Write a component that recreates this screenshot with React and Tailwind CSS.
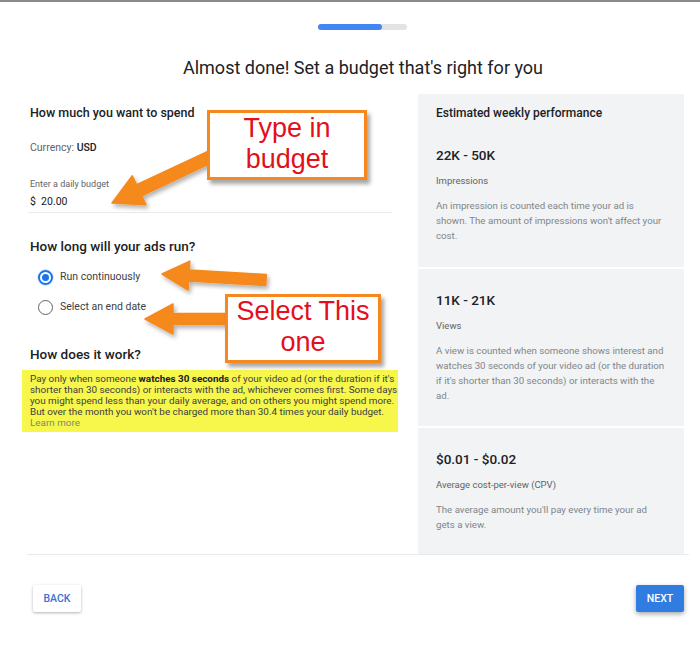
import React from "react";

const font = "font-['Roboto','Liberation_Sans',sans-serif]";

// polygon for a fat annotation arrow, tail -> tip
function arrowPoints(x1, y1, x2, y2, shaft, headW, headL) {
  const dx = x2 - x1;
  const dy = y2 - y1;
  const len = Math.hypot(dx, dy);
  const ux = dx / len;
  const uy = dy / len;
  const nx = -uy;
  const ny = ux;
  const bx = x2 - ux * headL;
  const by = y2 - uy * headL;
  const p = [
    [x1 + (nx * shaft) / 2, y1 + (ny * shaft) / 2],
    [bx + (nx * shaft) / 2, by + (ny * shaft) / 2],
    [bx + (nx * headW) / 2, by + (ny * headW) / 2],
    [x2, y2],
    [bx - (nx * headW) / 2, by - (ny * headW) / 2],
    [bx - (nx * shaft) / 2, by - (ny * shaft) / 2],
    [x1 - (nx * shaft) / 2, y1 - (ny * shaft) / 2],
  ];
  return p.map((q) => q[0].toFixed(1) + "," + q[1].toFixed(1)).join(" ");
}

function Arrows() {
  return (
    <svg
      className="absolute left-0 top-0 pointer-events-none"
      width="700"
      height="654"
      viewBox="0 0 700 654"
    >
      <defs>
        <filter id="sh" x="-20%" y="-20%" width="140%" height="140%">
          <feDropShadow dx="2" dy="3" stdDeviation="2" floodColor="#000" floodOpacity="0.3" />
        </filter>
      </defs>
      <g fill="#f5891f" stroke="#f5891f" strokeWidth="1.5" strokeLinejoin="round" filter="url(#sh)">
        <polygon points={arrowPoints(212, 154, 112, 201, 12, 32, 30)} />
        <polygon points={arrowPoints(266, 278, 162, 272, 11, 29, 27)} />
        <polygon points={arrowPoints(230, 317, 145, 317, 11, 30, 28)} />
      </g>
    </svg>
  );
}

function Callout({ children, className }) {
  return (
    <div
      className={`absolute flex flex-col items-center justify-center pb-[3px] bg-white border-[3px] border-[#f5891f] shadow-[3px_4px_4px_rgba(0,0,0,0.35)] text-[27px] leading-[31px] text-[#e3101c] font-['Liberation_Sans',Arial,sans-serif] ${className}`}
    >
      {children}
    </div>
  );
}

function Radio({ checked, label }) {
  return (
    <div className="flex items-center h-[16px] pl-[8px]">
      {checked ? (
        <div className="w-[15px] h-[15px] rounded-full border-2 border-[#1a73e8] flex items-center justify-center shadow-[0_0_0_1px_rgba(26,115,232,0.15)]">
          <div className="w-[7px] h-[7px] rounded-full bg-[#1a73e8]" />
        </div>
      ) : (
        <div className="w-[15px] h-[15px] rounded-full border-[1.5px] border-[#5f6368]" />
      )}
      <span className="ml-[7px] text-[10.5px] text-[#3c4043]">{label}</span>
    </div>
  );
}

function Metric({ value, label, desc, first }) {
  return (
    <div
      className={`px-[18px] ${
        first ? "pt-[11px] pb-[24px]" : "pt-[22px] pb-[23px]"
      } border-b-2 border-white last:border-b-0 last:pb-[22px]`}
    >
      {first && (
        <div className="text-[12px] leading-[16px] font-medium text-[#202124] mb-[25px]">
          Estimated weekly performance
        </div>
      )}
      <div className="text-[13.5px] leading-[18px] font-medium text-[#202124]">{value}</div>
      <div className="mt-[10px] text-[9.5px] leading-[14px] text-[#5f6368]">{label}</div>
      <div className="mt-[10px] text-[9.7px] leading-[15px] text-[#80868b] whitespace-nowrap">{desc}</div>
    </div>
  );
}

export default function App() {
  return (
    <div className={`relative w-[700px] h-[654px] bg-white border-t-2 border-[#8a8a8a] ${font}`}>
      <div className="ml-[318px] mt-[22px] w-[89px] h-[6px] rounded-full bg-[#e3e3e3]">
        <div className="w-[64px] h-[6px] rounded-full bg-[#4285f4]" />
      </div>
      <div className="mt-[26px] ml-[26px] text-center text-[18px] leading-[24px] text-[#202124]">
        Almost done! Set a budget that's right for you
      </div>

      <div className="mt-[14px] ml-[27px] w-[662px] border-b border-[#e8eaed]">
        <div className="flex">
          <div className="w-[365px] pt-[10px] pl-[3px]">
            <div className="text-[12.5px] leading-[18px] font-medium text-[#202124]">
              How much you want to spend
            </div>
            <div className="mt-[18px] text-[10.5px] leading-[16px] text-[#5f6368]">
              Currency: <span className="font-medium text-[#202124]">USD</span>
            </div>
            <div className="mt-[21px] text-[9px] leading-[14px] text-[#5f6368]">
              Enter a daily budget
            </div>
            <div className="mt-[3px] text-[10.5px] leading-[16px] text-[#202124]">
              $&nbsp;&nbsp;20.00
            </div>
            <div className="mt-[2px] -ml-[2px] h-px bg-[#e8eaed]" />

            <div className="mt-[24px] text-[13.5px] leading-[18px] font-medium text-[#202124]">
              How long will your ads run?
            </div>
            <div className="mt-[14px]">
              <Radio checked label="Run continuously" />
            </div>
            <div className="mt-[14px]">
              <Radio label="Select an end date" />
            </div>
            <div className="mt-[30px] text-[13.5px] leading-[18px] font-medium text-[#202124]">
              How does it work?
            </div>
            <div className="mt-[7px] -ml-[8px] w-[376px] bg-[#f7f64a] pl-[8px] pt-[3px] pb-[4px] text-[9.9px] leading-[11px] text-[#3c4043] whitespace-nowrap">
              Pay only when someone <span className="font-bold text-[#202124]">watches 30 seconds</span> of your video ad (or the duration if it's
              <br />
              shorter than 30 seconds) or interacts with the ad, whichever comes first. Some days
              <br />
              you might spend less than your daily average, and on others you might spend more.
              <br />
              But over the month you won't be charged more than 30.4 times your daily budget.
              <br />
              <span className="text-[#7c8a6e]">Learn more</span>
            </div>
          </div>

          <div className="ml-[26px] w-[266px] bg-[#f1f3f4] self-start">
            <Metric
              first
              value="22K - 50K"
              label="Impressions"
              desc={
                <>
                  An impression is counted each time your ad is
                  <br />
                  shown. The amount of impressions won't affect your
                  <br />
                  cost.
                </>
              }
            />
            <Metric
              value="11K - 21K"
              label="Views"
              desc={
                <>
                  A view is counted when someone shows interest and
                  <br />
                  watches 30 seconds of your video ad (or the duration
                  <br />
                  if it's shorter than 30 seconds) or interacts with the
                  <br />
                  ad.
                </>
              }
            />
            <Metric
              value="$0.01 - $0.02"
              label="Average cost-per-view (CPV)"
              desc={
                <>
                  The average amount you'll pay every time your ad
                  <br />
                  gets a view.
                </>
              }
            />
          </div>
        </div>
      </div>

      <div className="mt-[30px] ml-[33px] w-[651px] flex justify-between">
        <button className="w-[48px] h-[27px] bg-white rounded-[2px] shadow-[0_1px_3px_rgba(0,0,0,0.3)] text-[10.5px] font-medium text-[#3b6fd6]">
          BACK
        </button>
        <button className="w-[48px] h-[27px] bg-[#2f7de1] rounded-[2px] shadow-[0_2px_5px_rgba(0,0,0,0.35)] text-[10.5px] font-medium text-white">
          NEXT
        </button>
      </div>

      <Arrows />
      <Callout className="left-[207px] top-[108px] w-[160px] h-[70px]">
        <span>Type in</span>
        <span>budget</span>
      </Callout>
      <Callout className="left-[225px] top-[292px] w-[156px] h-[69px]">
        <span>Select This</span>
        <span>one</span>
      </Callout>
    </div>
  );
}
